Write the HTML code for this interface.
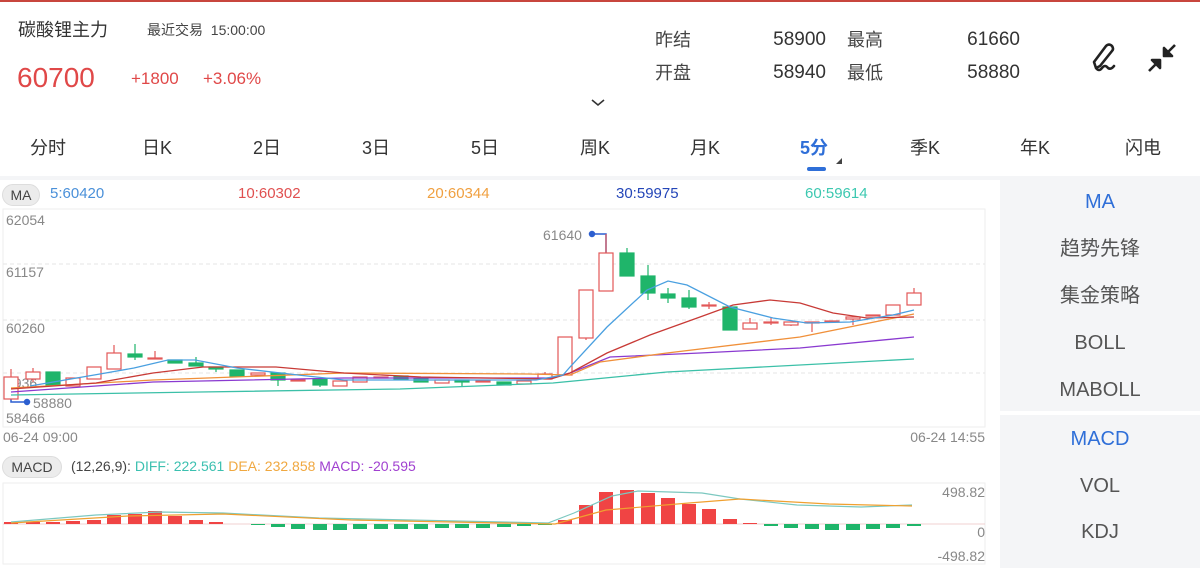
<!DOCTYPE html>
<html><head><meta charset="utf-8"><style>
*{margin:0;padding:0;box-sizing:border-box}
body{width:1200px;height:568px;background:#fff;font-family:"Liberation Sans","Noto Sans CJK SC",sans-serif;position:relative;overflow:hidden;color:#333;line-height:24px}
.a{position:absolute;white-space:nowrap;line-height:24px}
.tab{position:absolute;top:136px;font-size:18px;color:#333;line-height:24px}
.rp{position:absolute;left:1000px;width:200px;text-align:center;font-size:20px;color:#555;line-height:24px}
</style></head><body>
<div class="a" style="left:0;top:0;width:1200px;height:2px;background:#c8463e"></div>
<div class="a" style="left:18px;top:18px;font-size:18px;color:#333">碳酸锂主力</div>
<div class="a" style="left:147px;top:18px;font-size:14px;color:#444">最近交易&nbsp; 15:00:00</div>
<div class="a" style="left:17px;top:66px;font-size:28px;color:#e04848">60700</div>
<div class="a" style="left:131px;top:67px;font-size:17px;color:#e04848">+1800</div>
<div class="a" style="left:203px;top:67px;font-size:17px;color:#e04848">+3.06%</div>
<div class="a" style="left:655px;top:28px;font-size:18px;color:#444">昨结</div>
<div class="a" style="left:726px;top:28px;width:100px;text-align:right;font-size:19px;color:#333">58900</div>
<div class="a" style="left:847px;top:28px;font-size:18px;color:#444">最高</div>
<div class="a" style="left:920px;top:28px;width:100px;text-align:right;font-size:19px;color:#333">61660</div>
<div class="a" style="left:655px;top:61px;font-size:18px;color:#444">开盘</div>
<div class="a" style="left:726px;top:61px;width:100px;text-align:right;font-size:19px;color:#333">58940</div>
<div class="a" style="left:847px;top:61px;font-size:18px;color:#444">最低</div>
<div class="a" style="left:920px;top:61px;width:100px;text-align:right;font-size:19px;color:#333">58880</div>
<svg class="a" style="left:1088px;top:38px" width="36" height="40" viewBox="0 0 36 40"><path d="M8 30 L6 24 L18 8 Q21 5 24 8 Q26 11 24 13 L12 28 Z M8 30 Q11 34 14 30 Q17 26 20 30 Q23 32 26 28" fill="none" stroke="#222" stroke-width="2.6" stroke-linejoin="round" stroke-linecap="round"/></svg>
<svg class="a" style="left:1144px;top:40px" width="36" height="36" viewBox="0 0 36 36"><path d="M31 5 L22 14 M20 8 L20 16 L28 16 Z M5 31 L14 22 M16 28 L16 20 L8 20 Z" stroke="#222" stroke-width="2.6" fill="#222" stroke-linejoin="round"/></svg>
<svg class="a" style="left:590px;top:98px" width="16" height="10"><path d="M2 2 L8 7 L14 2" fill="none" stroke="#333" stroke-width="1.6"/></svg>
<div class="tab" style="left:30px">分时</div>
<div class="tab" style="left:142px">日K</div>
<div class="tab" style="left:253px">2日</div>
<div class="tab" style="left:362px">3日</div>
<div class="tab" style="left:471px">5日</div>
<div class="tab" style="left:580px">周K</div>
<div class="tab" style="left:690px">月K</div>
<div class="tab" style="left:800px;color:#2f6fd8;font-weight:bold">5分</div>
<div class="tab" style="left:910px">季K</div>
<div class="tab" style="left:1020px">年K</div>
<div class="tab" style="left:1125px">闪电</div>
<div class="a" style="left:807px;top:167px;width:19px;height:4px;border-radius:2px;background:#2f6fd8"></div>
<svg class="a" style="left:835px;top:157px" width="8" height="8"><path d="M7 1 L7 7 L1 7 Z" fill="#444"/></svg>
<div class="a" style="left:0;top:176px;width:1200px;height:4px;background:#f4f5f7"></div>
<div class="a" style="left:1000px;top:180px;width:200px;height:231px;background:#f4f5f7"></div>
<div class="a" style="left:1000px;top:415px;width:200px;height:153px;background:#f4f5f7"></div>
<div class="rp" style="top:190px;color:#2f6fd8">MA</div>
<div class="rp" style="top:237px">趋势先锋</div>
<div class="rp" style="top:284px">集金策略</div>
<div class="rp" style="top:331px">BOLL</div>
<div class="rp" style="top:378px">MABOLL</div>
<div class="rp" style="top:427px;color:#2f6fd8">MACD</div>
<div class="rp" style="top:474px">VOL</div>
<div class="rp" style="top:520px">KDJ</div>
<div class="a" style="left:2px;top:184px;width:38px;height:22px;border-radius:11px;background:#ececec;border:1px solid #ddd;font-size:14px;color:#444;text-align:center;line-height:20px">MA</div>
<div class="a" style="left:50px;top:182px;font-size:15px;color:#4a90d9">5:60420</div>
<div class="a" style="left:238px;top:182px;font-size:15px;color:#e05050">10:60302</div>
<div class="a" style="left:427px;top:182px;font-size:15px;color:#f0a040">20:60344</div>
<div class="a" style="left:616px;top:182px;font-size:15px;color:#2446b8">30:59975</div>
<div class="a" style="left:805px;top:182px;font-size:15px;color:#3cc8b0">60:59614</div>
<div class="a" style="left:2px;top:456px;width:60px;height:22px;border-radius:11px;background:#ececec;border:1px solid #ddd;font-size:14px;color:#444;text-align:center;line-height:20px">MACD</div>
<div class="a" style="left:71px;top:454px;font-size:14px;color:#444">(12,26,9): <span style="color:#3cc0b0">DIFF: 222.561</span> <span style="color:#f0a840">DEA: 232.858</span> <span style="color:#a040d0">MACD: -20.595</span></div>
<svg class="a" style="left:0;top:0" width="1000" height="568">
<g fill="none" stroke="#eee"><rect x="3" y="209" width="982" height="218"/><rect x="3" y="483" width="982" height="81"/></g>
<g stroke="#e6e6e6" stroke-dasharray="4 3"><line x1="3" y1="264" x2="985" y2="264"/><line x1="3" y1="320" x2="985" y2="320"/><line x1="3" y1="373" x2="985" y2="373"/></g>
<g font-size="14" fill="#888" font-family="Liberation Sans,sans-serif">
<text x="6" y="225">62054</text><text x="6" y="277">61157</text><text x="6" y="333">60260</text><text x="6" y="388">5936</text><text x="6" y="423">58466</text>
<text x="33" y="408">58880</text><text x="543" y="240">61640</text>
<text x="3" y="442">06-24 09:00</text><text x="985" y="442" text-anchor="end">06-24 14:55</text>
<text x="985" y="497" text-anchor="end">498.82</text><text x="985" y="537" text-anchor="end">0</text><text x="985" y="561" text-anchor="end">-498.82</text>
</g>
<g stroke="#2c5fd0" stroke-width="1.5" fill="#2c5fd0"><path d="M11 399 V402 H27" fill="none"/><circle cx="27" cy="402" r="2.5"/><path d="M592 234 H606 V253" fill="none"/><circle cx="592" cy="234" r="2.5"/></g>
<g stroke="#e25858" stroke-width="1.2" fill="#fff">
<path d="M11 369V377M33 368V372M33 379V382M114 345V353M155 351V359M545 372V374M606 234V253M586 338V340M709 302V309M750 318V323M771 318V325M791 325V326M812 323V332M853 319V325"/>
<rect x="4" y="377" width="14" height="22"/><rect x="26" y="372" width="14" height="7"/><rect x="66" y="378" width="14" height="8"/><rect x="87" y="367" width="14" height="12"/><rect x="107" y="353" width="14" height="16"/><rect x="148" y="358" width="14" height="1"/><rect x="251" y="373" width="14" height="2"/><rect x="291" y="380" width="14" height="1"/><rect x="333" y="381" width="14" height="5"/><rect x="353" y="377" width="14" height="5"/><rect x="374" y="377" width="14" height="1"/><rect x="435" y="380" width="14" height="3"/><rect x="476" y="381" width="14" height="1"/><rect x="517" y="381" width="14" height="3"/><rect x="538" y="374" width="14" height="5"/><rect x="558" y="337" width="14" height="38"/><rect x="579" y="290" width="14" height="48"/><rect x="599" y="253" width="14" height="38"/><rect x="702" y="305" width="14" height="1"/><rect x="743" y="323" width="14" height="6"/><rect x="764" y="322" width="14" height="1"/><rect x="784" y="322" width="14" height="3"/><rect x="805" y="322" width="14" height="1"/><rect x="825" y="321" width="14" height="1"/><rect x="846" y="317" width="14" height="2"/><rect x="866" y="315" width="14" height="1"/><rect x="886" y="305" width="14" height="10"/><rect x="907" y="293" width="14" height="12"/><path d="M914 288V293"/>
</g>
<g stroke="#1fb56a" stroke-width="1.2" fill="#1fb56a">
<path d="M135 344V360M196 357V366M216 369V372M278 380V386M320 385V387M462 382V387M627 248V253M648 265V300M668 288V303M689 290V309"/>
<rect x="46" y="372" width="14" height="13"/><rect x="128" y="354" width="14" height="3"/><rect x="168" y="360" width="14" height="3"/><rect x="189" y="363" width="14" height="3"/><rect x="209" y="367" width="14" height="2"/><rect x="230" y="370" width="14" height="6"/><rect x="271" y="373" width="14" height="7"/><rect x="313" y="379" width="14" height="6"/><rect x="394" y="376" width="14" height="3"/><rect x="414" y="379" width="14" height="3"/><rect x="455" y="380" width="14" height="2"/><rect x="497" y="382" width="14" height="3"/><rect x="620" y="253" width="14" height="23"/><rect x="641" y="276" width="14" height="17"/><rect x="661" y="294" width="14" height="4"/><rect x="682" y="298" width="14" height="9"/><rect x="723" y="307" width="14" height="23"/>
</g>
<g fill="none" stroke-width="1.3">
<polyline stroke="#3cc0a8" points="11,395 200,392 400,389 553,383 667,372 914,359"/>
<polyline stroke="#8a3ad0" points="11,392 153,382 344,378 551,378 570,373 610,357 700,353 800,348 914,337"/>
<polyline stroke="#f0903a" points="11,388 153,380 344,373 528,374 570,375 600,362 667,353 800,337 914,314"/>
<polyline stroke="#c83a36" points="11,389 96,383 153,373 203,367 276,367 344,373 421,377 551,379 570,373 607,353 650,335 700,317 733,305 770,300 800,303 833,313 867,318 914,317"/>
<polyline stroke="#4aa0e0" points="30,386 100,374 134,368 168,360 195,360 237,368 298,375 344,380 421,380 536,380 563,375 570,367 607,327 647,290 668,281 687,285 730,307 773,318 807,323 850,322 893,315 914,310"/>
</g>
<line x1="3" y1="524" x2="985" y2="524" stroke="#f0d0d0" stroke-width="1"/>
<g fill="#f04444">
<rect x="4" y="522" width="14" height="2"/><rect x="26" y="522" width="14" height="2"/><rect x="46" y="522" width="14" height="2"/><rect x="66" y="521" width="14" height="3"/><rect x="87" y="520" width="14" height="4"/><rect x="107" y="515" width="14" height="9"/><rect x="128" y="514" width="14" height="10"/><rect x="148" y="511" width="14" height="13"/><rect x="168" y="516" width="14" height="8"/><rect x="189" y="520" width="14" height="4"/><rect x="209" y="522" width="14" height="2"/>
<rect x="558" y="520" width="14" height="4"/><rect x="579" y="505" width="14" height="19"/><rect x="599" y="492" width="14" height="32"/><rect x="620" y="490" width="14" height="34"/><rect x="641" y="493" width="14" height="31"/><rect x="661" y="498" width="14" height="26"/><rect x="682" y="504" width="14" height="20"/><rect x="702" y="509" width="14" height="15"/><rect x="723" y="519" width="14" height="5"/><rect x="743" y="523" width="14" height="1"/>
</g>
<g fill="#1fb56a">
<rect x="251" y="524" width="14" height="1"/><rect x="271" y="524" width="14" height="3"/><rect x="291" y="524" width="14" height="5"/><rect x="313" y="524" width="14" height="6"/><rect x="333" y="524" width="14" height="6"/><rect x="353" y="524" width="14" height="5"/><rect x="374" y="524" width="14" height="5"/><rect x="394" y="524" width="14" height="5"/><rect x="414" y="524" width="14" height="5"/><rect x="435" y="524" width="14" height="4"/><rect x="455" y="524" width="14" height="4"/><rect x="476" y="524" width="14" height="4"/><rect x="497" y="524" width="14" height="3"/><rect x="517" y="524" width="14" height="2"/><rect x="538" y="524" width="14" height="1"/>
<rect x="764" y="524" width="14" height="2"/><rect x="784" y="524" width="14" height="4"/><rect x="805" y="524" width="14" height="5"/><rect x="825" y="524" width="14" height="6"/><rect x="846" y="524" width="14" height="6"/><rect x="866" y="524" width="14" height="5"/><rect x="886" y="524" width="14" height="4"/><rect x="907" y="524" width="14" height="2"/>
</g>
<g fill="none" stroke-width="1.2">
<polyline stroke="#7cc8c0" points="11,522 96,515 159,512 223,513 319,518 548,523 574,513 612,496 638,491 702,493 740,499 797,505 861,507 912,505"/>
<polyline stroke="#f0a030" points="11,523 128,516 223,514 351,520 555,524 606,510 689,503 740,499 829,504 912,506"/>
</g>
</svg>
</body></html>
